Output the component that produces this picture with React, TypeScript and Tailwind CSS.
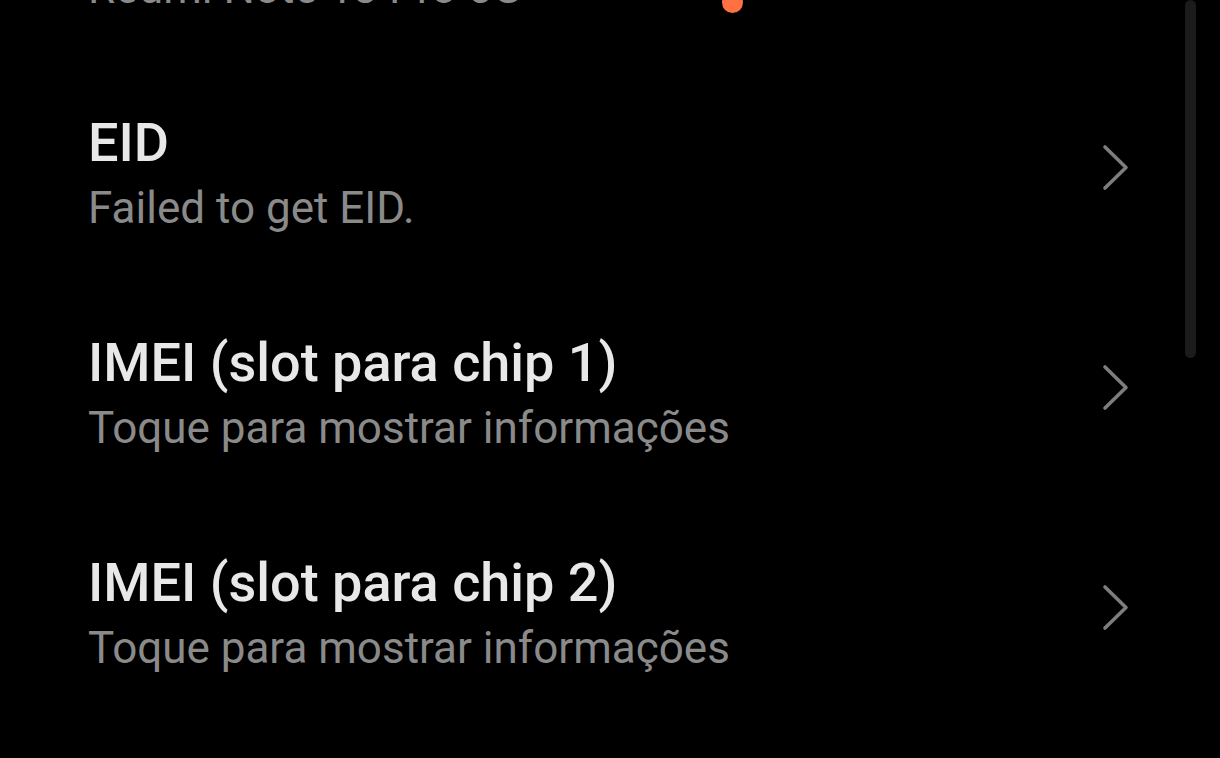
import React from "react";

function Chevron() {
  return (
    <svg width="27" height="48" viewBox="0 0 27 48" fill="none" className="mb-[8px] shrink-0">
      <polyline
        points="3,3 24,23.5 3,44"
        stroke="#7d7d7d"
        strokeWidth="3.6"
        strokeLinecap="round"
        strokeLinejoin="round"
        fill="none"
      />
    </svg>
  );
}

type RowProps = { title: string; subtitle: string; dot?: boolean };

function Row({ title, subtitle, dot }: RowProps) {
  return (
    <div className="relative flex h-[220px] items-center pl-[88px] pr-[91px]">
      <div className="flex min-w-0 flex-1 flex-col">
        <div className="text-[54px] leading-[60px] font-medium text-[#e8e8e8]">{title}</div>
        <div className="mt-[11px] text-[44px] leading-[48px] text-[#8a8a8a]">{subtitle}</div>
      </div>
      <Chevron />
      {dot && (
        <span className="absolute bottom-[49px] left-[722px] h-[21px] w-[21px] rounded-full bg-[#ff7142]" />
      )}
    </div>
  );
}

export default function App() {
  return (
    <div
      className="relative h-[758px] w-[1220px] overflow-hidden bg-black"
      style={{ fontFamily: "Roboto, 'Noto Sans', sans-serif" }}
    >
      <div className="mt-[-158px] flex flex-col">
        <Row title="Nome do dispositivo" subtitle="Redmi Note 13 Pro 5G" dot />
        <Row title="EID" subtitle="Failed to get EID." />
        <Row title="IMEI (slot para chip 1)" subtitle="Toque para mostrar informações" />
        <Row title="IMEI (slot para chip 2)" subtitle="Toque para mostrar informações" />
      </div>
      <div className="absolute left-[1185px] top-0 h-[358px] w-[11px] rounded-full bg-[#1b1b1b]" />
    </div>
  );
}
